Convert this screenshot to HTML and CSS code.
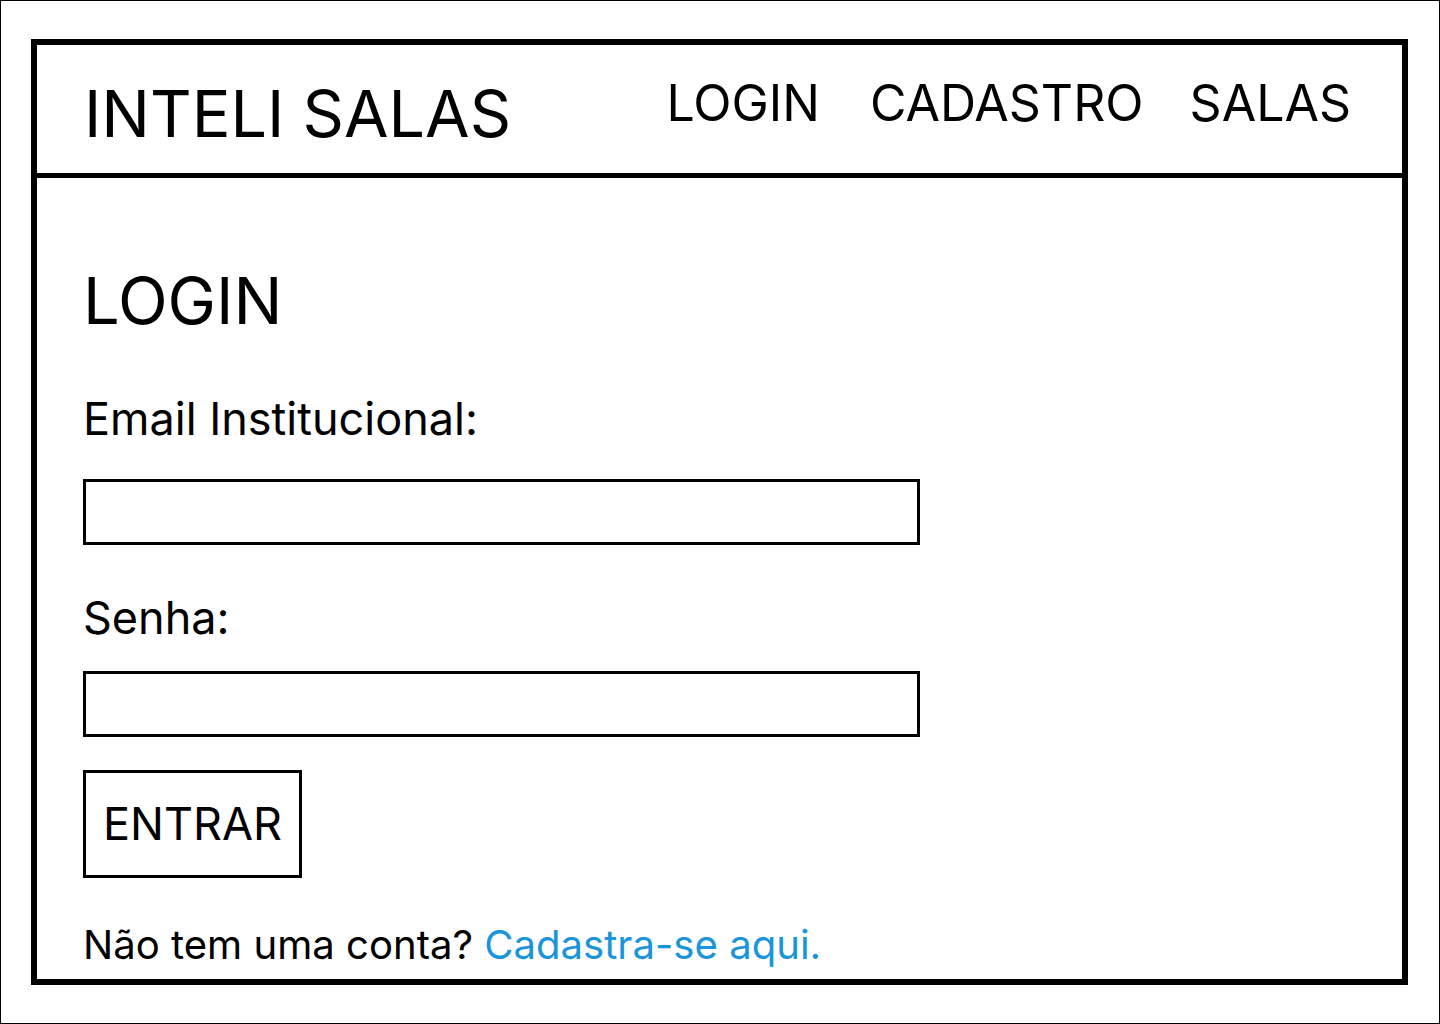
FILE: index.html
```html
<!DOCTYPE html>
<html lang="pt-BR">
<head>
<meta charset="utf-8">
<title>Inteli Salas - Login</title>
<link rel="stylesheet" href="styles.css">
</head>
<body>
<div class="frame">
  <header class="header">
    <div class="logo">INTELI SALAS</div>
    <nav class="nav">
      <a class="nav-link nav-login" href="#">LOGIN</a>
      <a class="nav-link nav-cadastro" href="#">CADASTRO</a>
      <a class="nav-link" href="#">SALAS</a>
    </nav>
  </header>
  <main class="main">
    <h1 class="title">LOGIN</h1>
    <form class="form">
      <label class="label label-email" for="email">Email Institucional:</label>
      <input class="field" id="email" type="email">
      <label class="label label-senha" for="senha">Senha:</label>
      <input class="field" id="senha" type="password">
      <button class="btn" type="button">ENTRAR</button>
    </form>
    <p class="signup">Não tem uma conta? <a class="signup-link" href="#">Cadastra-se aqui.</a></p>
  </main>
</div>
</body>
</html>
```

FILE: styles.css
```css
html, body {
  margin: 0;
  padding: 0;
}
body {
  width: 1440px;
  height: 1024px;
  box-sizing: border-box;
  border: 1px solid #000;
  padding: 38px 31px 38px 30px;
  font-family: Inter, "Noto Sans", sans-serif;
  color: #000;
  background: #fff;
}
.frame {
  height: 100%;
  box-sizing: border-box;
  border: 6px solid #000;
  display: flex;
  flex-direction: column;
  overflow: hidden;
}
.header {
  height: 133px;
  box-sizing: border-box;
  border-bottom: 5px solid #000;
  display: flex;
  justify-content: space-between;
  align-items: flex-start;
  padding: 30px 51px 0 47px;
  flex-shrink: 0;
}
.logo {
  font-size: 64.6px;
  line-height: 1.2;
  font-weight: 400;
}
.nav {
  display: flex;
  margin-top: -2px;
}
.nav-link {
  font-size: 50px;
  line-height: 1.2;
  color: #000;
  text-decoration: none;
}
.nav-login {
  margin-right: 50px;
}
.nav-cadastro {
  margin-right: 46px;
}
.main {
  padding: 84px 0 0 46px;
}
.title {
  margin: 0;
  font-size: 65px;
  line-height: 1.2;
  font-weight: 400;
}
.form {
  display: flex;
  flex-direction: column;
  align-items: flex-start;
}
.label {
  font-size: 45px;
  line-height: 1.2;
}
.label-email {
  margin-top: 52px;
  margin-bottom: 33px;
}
.label-senha {
  margin-top: 46px;
  margin-bottom: 26px;
}
.field {
  width: 837px;
  height: 66px;
  box-sizing: border-box;
  border: 3px solid #000;
  border-radius: 0;
  margin: 0;
  padding: 0 10px;
  font-family: inherit;
  font-size: 30px;
  background: #fff;
  outline: none;
}
.btn {
  margin-top: 33px;
  border: 3px solid #000;
  border-radius: 0;
  background: #fff;
  font-family: inherit;
  font-size: 45px;
  line-height: 1.2;
  padding: 24px 17px;
  color: #000;
}
.signup {
  margin: 43px 0 0 0;
  font-size: 40.1px;
  line-height: 1.2;
}
.signup-link {
  color: #1a95db;
  text-decoration: none;
}
```
